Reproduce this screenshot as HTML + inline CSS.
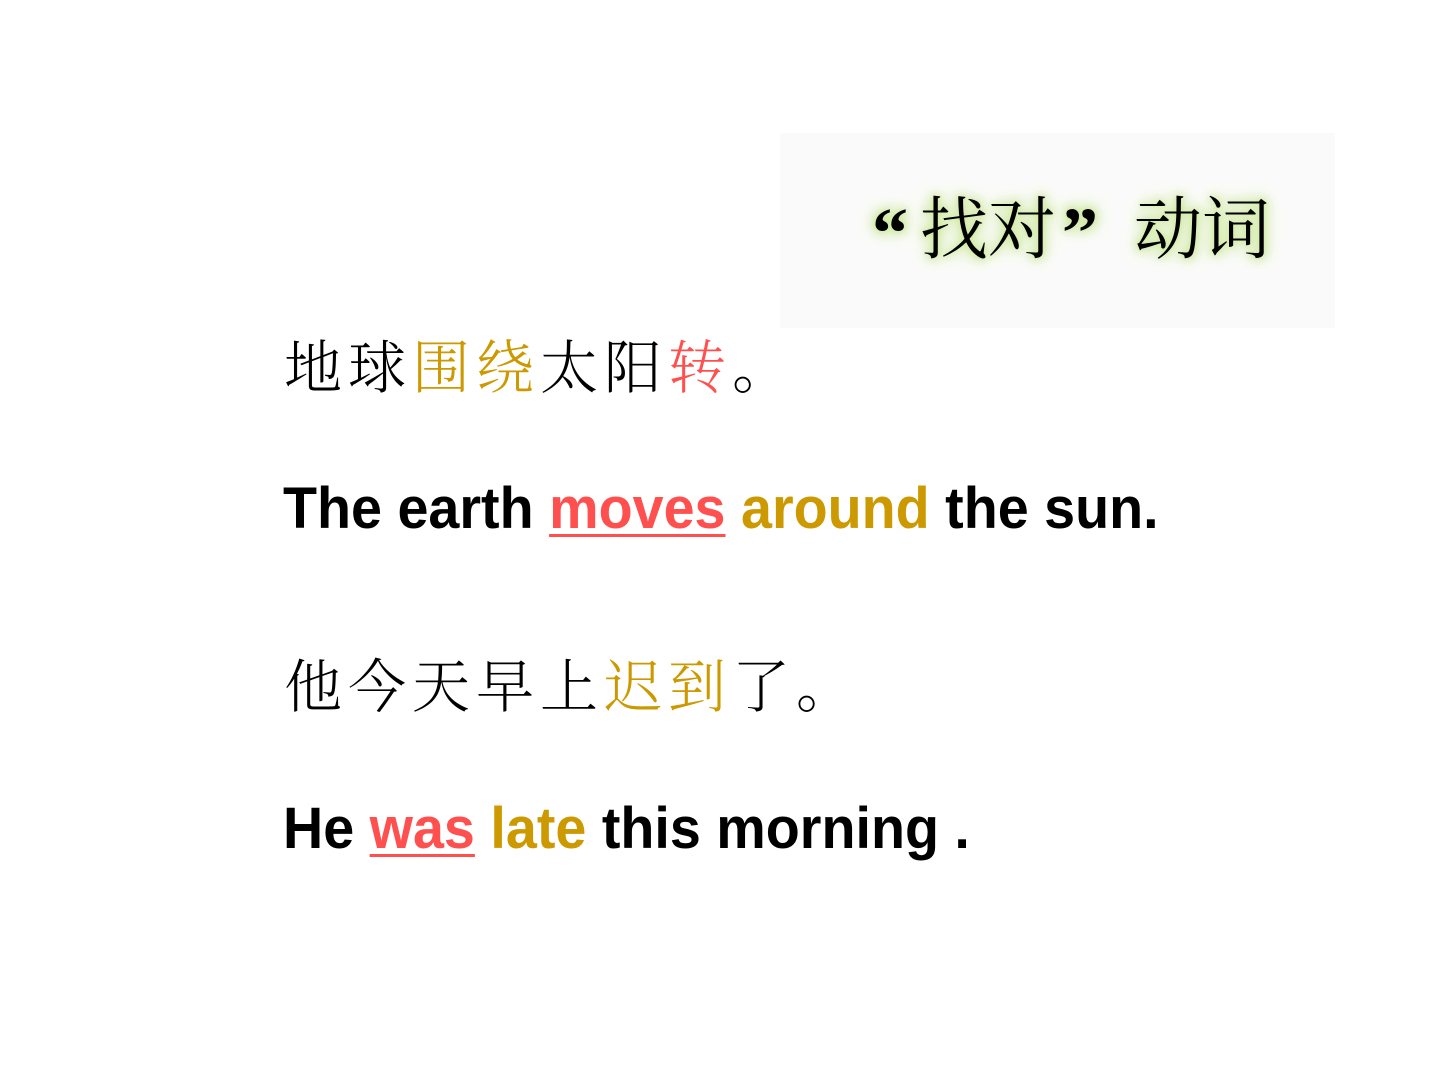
<!DOCTYPE html>
<html><head><meta charset="utf-8"><style>
html,body{margin:0;padding:0;width:1440px;height:1080px;background:#fff;overflow:hidden;position:relative}
.box{position:absolute;left:780px;top:133px;width:555px;height:195px;background:#fafafa}
.t{position:absolute;top:180px;font-family:"Noto Serif CJK SC","Liberation Serif",serif;font-size:68px;line-height:90px;color:#000;white-space:nowrap;
text-shadow:0 0 6px #cfe8a0,0 0 10px #cfe8a0,0 0 14px #d4eca8,0 0 18px #dff0c0,0 0 22px #e4f2cc}
.q{font-family:"Liberation Serif",serif;font-weight:bold;font-size:72px}
.cn{position:absolute;left:284px;font-family:"Noto Serif CJK SC","WenQuanYi Zen Hei",serif;font-weight:300;font-size:58px;letter-spacing:6px;line-height:70px;white-space:nowrap;color:#000}
.en{position:absolute;left:283px;font-family:"Liberation Sans",sans-serif;font-weight:bold;font-size:58px;line-height:70px;white-space:nowrap;color:#000;transform-origin:0 0}
.r{color:#ff5050}.g{color:#cc9900}
.u{text-decoration:underline;text-decoration-thickness:3px;text-underline-offset:6px}
</style></head><body>
<div class="box"></div>
<div class="t q" style="left:872px;top:188px">“</div>
<div class="t" style="left:920px">找对</div>
<div class="t q" style="left:1062px;top:188px">”</div>
<div class="t" style="left:1134px">动词</div>
<div class="cn" style="top:328px">地球<span class="g">围绕</span>太阳<span class="r">转</span>。</div>
<div class="en" style="top:474px;transform:scaleX(0.96)">The earth <span class="r u">moves</span> <span class="g">around</span> the sun.</div>
<div class="cn" style="top:647px">他今天早上<span class="g">迟到</span>了。</div>
<div class="en" style="top:794px;transform:scaleX(0.96)">He <span class="r u">was</span> <span class="g">late</span> this morning .</div>
</body></html>
